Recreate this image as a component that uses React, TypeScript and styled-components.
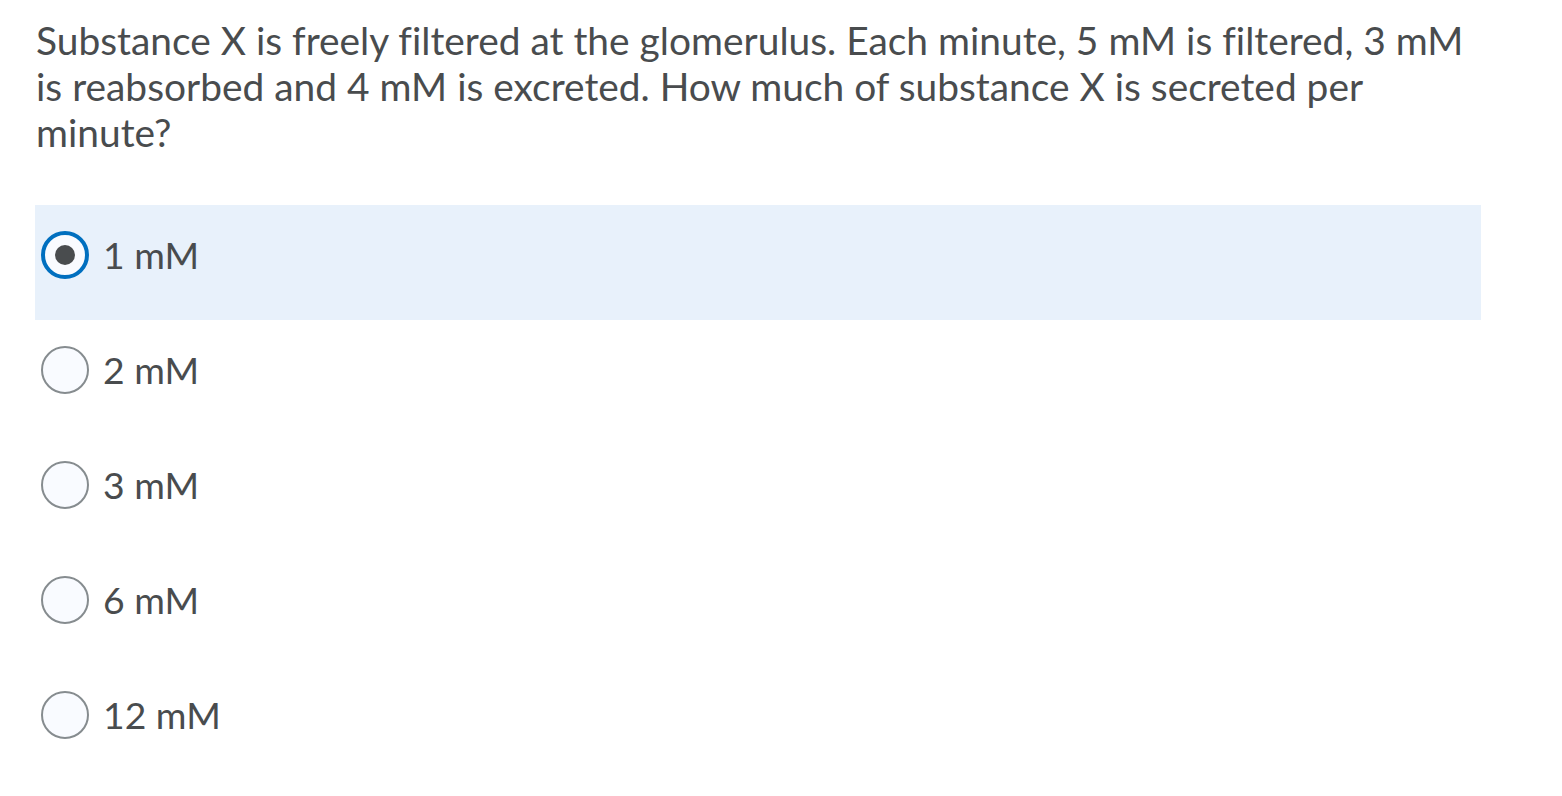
import React from "react";
import styled, { createGlobalStyle } from "styled-components";

const Global = createGlobalStyle`
  html, body { margin: 0; padding: 0; background: #ffffff; }
  body {
    font-family: Lato, "Open Sans", sans-serif;
    color: #494c4e;
    font-variant-ligatures: none;
  }
`;

const Page = styled.div`
  padding: 17px 0 0 35px;
  width: 1446px;
`;

const Question = styled.p`
  margin: 0 0 50px 1px;
  font-size: 38.9px;
  line-height: 46px;
  width: 1440px;
`;

const Options = styled.div`
  display: flex;
  flex-direction: column;
`;

const Option = styled.label<{ $selected?: boolean }>`
  display: flex;
  align-items: center;
  gap: 14px;
  height: 115px;
  padding: 0 0 16px 6px;
  box-sizing: border-box;
  background: ${(p) => (p.$selected ? "#e8f1fb" : "transparent")};
  font-size: 37.3px;
`;

const Radio = styled.span<{ $checked?: boolean }>`
  box-sizing: border-box;
  width: 48px;
  height: 48px;
  border-radius: 50%;
  background: #f9fbff;
  border: ${(p) => (p.$checked ? "4px solid #006fbf" : "2px solid #868c8f")};
  display: flex;
  align-items: center;
  justify-content: center;
  flex: none;
  &::after {
    content: "";
    display: ${(p) => (p.$checked ? "block" : "none")};
    width: 20px;
    height: 20px;
    border-radius: 50%;
    background: #494c4e;
  }
`;

const Label = styled.span`
  line-height: 1;
`;

const answers = ["1 mM", "2 mM", "3 mM", "6 mM", "12 mM"];

export default function App() {
  return (
    <>
      <Global />
      <Page>
        <Question>
          Substance X is freely filtered at the glomerulus. Each minute, 5 mM is filtered, 3 mM is reabsorbed and 4 mM is excreted. How much of substance X is secreted per minute?
        </Question>
        <Options>
          {answers.map((a, i) => (
            <Option key={a} $selected={i === 0}>
              <Radio $checked={i === 0} />
              <Label>{a}</Label>
            </Option>
          ))}
        </Options>
      </Page>
    </>
  );
}
